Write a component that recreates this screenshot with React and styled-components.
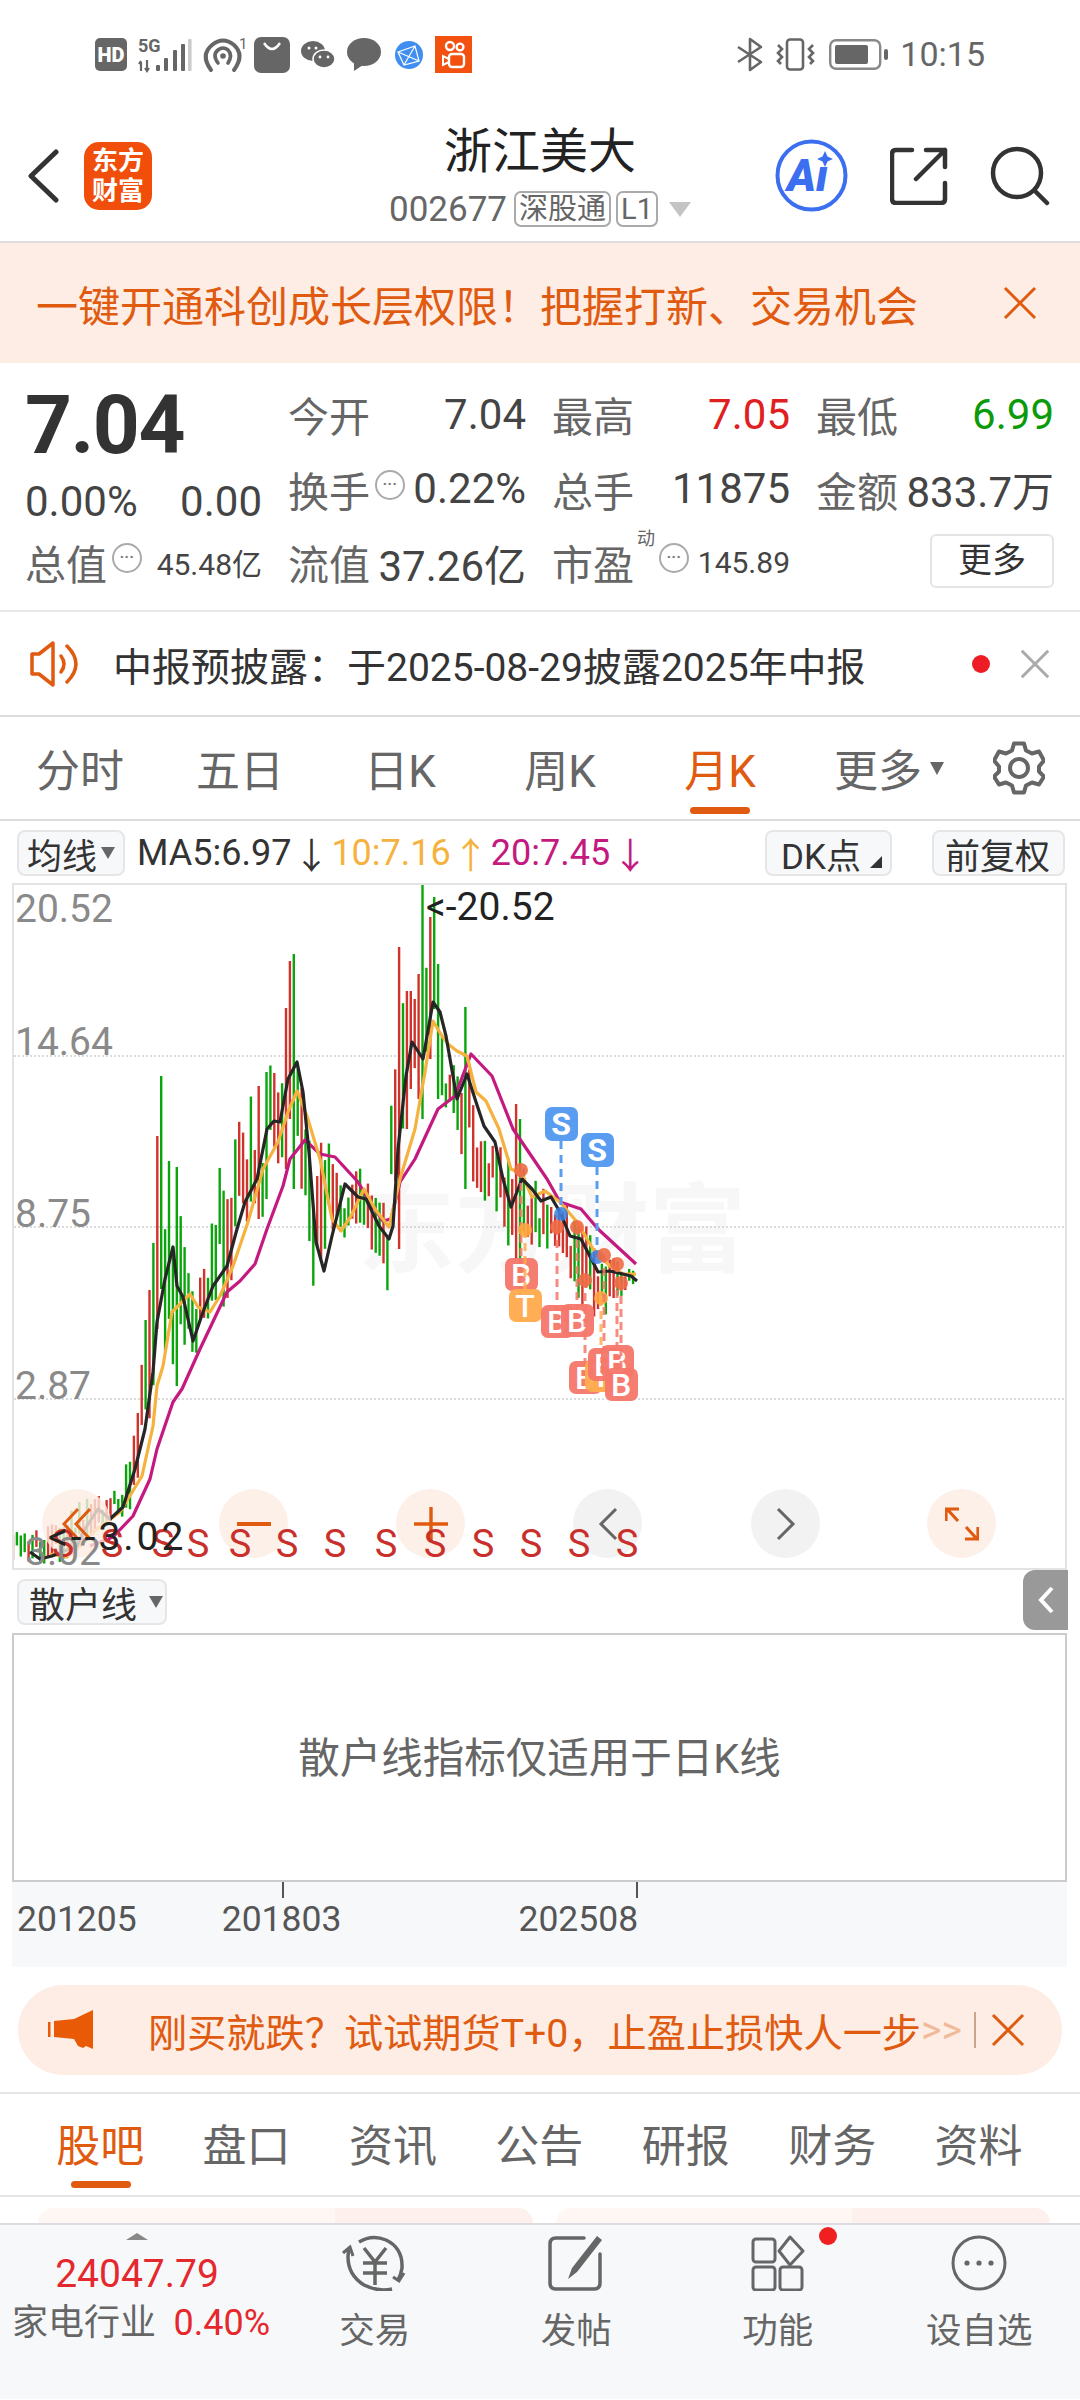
import React from 'react';
import styled, { createGlobalStyle } from 'styled-components';

const ORANGE = '#e05a10';
const RED = '#d0332b';
const GREEN = '#0aa50a';

const GlobalStyle = createGlobalStyle`
  html, body {
    margin: 0;
    padding: 0;
    background: #fff;
  }
  body {
    font-family: Roboto, "Noto Sans CJK SC", sans-serif;
    color: #444;
  }
  * {
    box-sizing: border-box;
  }
`;

// chart data, in page pixels
const MA5 = [[30,1553],[40,1560],[52,1557],[77,1547],[83,1533],[98,1510],[110,1520],[123,1508],[135,1470],[145,1430],[153,1373],[157,1323],[165,1280],[173,1248],[177,1287],[183,1298],[193,1342],[203,1313],[213,1287],[227,1267],[237,1230],[245,1203],[257,1180],[267,1130],[274,1122],[280,1123],[288,1080],[297,1063],[303,1093],[309,1153],[316,1243],[324,1272],[332,1237],[345,1185],[358,1198],[366,1200],[379,1227],[389,1240],[393,1227],[398,1150],[406,1077],[412,1043],[423,1060],[433,1003],[440,1013],[446,1037],[457,1100],[467,1075],[476,1103],[484,1127],[495,1143],[503,1180],[511,1208],[522,1180],[532,1190],[541,1202],[551,1198],[560,1213],[570,1237],[581,1240],[598,1273],[610,1272],[631,1277],[637,1282]];
const MA10 = [[50,1555],[67,1558],[80,1547],[97,1530],[120,1513],[142,1477],[153,1427],[157,1387],[163,1367],[172,1313],[190,1295],[198,1308],[210,1313],[220,1297],[233,1267],[248,1223],[263,1170],[278,1143],[288,1113],[297,1092],[307,1117],[320,1160],[332,1220],[341,1232],[351,1217],[364,1190],[375,1210],[389,1228],[400,1180],[415,1130],[425,1073],[433,1022],[442,1037],[448,1045],[457,1052],[467,1057],[476,1093],[486,1102],[499,1130],[511,1170],[522,1175],[532,1198],[545,1192],[560,1203],[577,1223],[593,1250],[610,1267],[623,1275],[636,1275]];
const MA20 = [[90,1547],[113,1538],[133,1517],[150,1480],[157,1450],[173,1403],[182,1390],[200,1350],[227,1293],[240,1282],[255,1265],[267,1230],[283,1187],[290,1160],[305,1141],[320,1155],[335,1158],[358,1183],[370,1203],[383,1222],[391,1220],[400,1183],[415,1160],[438,1110],[455,1097],[471,1055],[492,1077],[513,1130],[547,1180],[560,1203],[581,1210],[598,1230],[636,1265]];

const TOP_EDGE = [[13,1530],[60,1520],[90,1490],[120,1490],[130,1440],[137,1377],[148,1277],[157,1200],[177,1190],[190,1260],[209,1230],[229,1110],[245,1100],[260,1090],[285,1030],[300,1040],[310,1120],[332,1135],[345,1190],[360,1160],[372,1170],[385,1200],[398,1000],[410,992],[421,950],[437,965],[446,1060],[465,1040],[480,1120],[500,1130],[518,1140],[525,1160],[540,1180],[560,1195],[580,1210],[600,1240],[625,1265],[637,1272]];
const BOTTOM_EDGE = [[13,1565],[60,1565],[100,1540],[135,1510],[148,1440],[165,1405],[177,1387],[190,1370],[210,1330],[235,1290],[260,1230],[290,1170],[305,1240],[315,1320],[330,1290],[345,1240],[365,1240],[380,1270],[390,1300],[398,1220],[410,1100],[430,1100],[450,1130],[475,1190],[490,1210],[510,1260],[530,1250],[560,1250],[580,1320],[600,1330],[620,1300],[637,1285]];
const SPIKES = [[157,1137,1330,RED],[161,1077,1290,GREEN],[168,1162,1320,GREEN],[177,1168,1387,GREEN],[265,1073,1200,GREEN],[260,1087,1220,RED],[285,1009,1170,RED],[289,962,1120,RED],[292,955,1190,GREEN],[398,948,1250,RED],[401,927,1180,GREEN],[406,992,1130,RED],[410,992,1090,RED],[417,975,1100,RED],[421,885,1120,GREEN],[429,918,1060,RED],[433,898,1010,GREEN],[437,965,1100,GREEN],[465,1008,1190,GREEN],[518,1105,1260,RED],[521,1120,1300,GREEN]];

const rnd = n => {
  const s = Math.sin(n * 12.9898) * 43758.5453;
  return s - Math.floor(s);
};

const lerp = (pts, x) => {
  for (let i = 1; i < pts.length; i++) {
    if (x <= pts[i][0]) {
      const [x0, y0] = pts[i - 1];
      const [x1, y1] = pts[i];
      return y0 + ((y1 - y0) * (x - x0)) / (x1 - x0);
    }
  }
  return pts[pts.length - 1][1];
};

const candles = [];
for (let i = 0; i < 160; i++) {
  const x = 13 + 3.9 * i;
  const spike = SPIKES.find(s => Math.abs(s[0] - x) < 1.96);
  if (spike) {
    candles.push({ x, top: spike[1], bottom: spike[2], color: spike[3] });
    continue;
  }
  const hi = lerp(TOP_EDGE, x);
  const lo = lerp(BOTTOM_EDGE, x);
  const range = lo - hi;
  const len = range * (0.35 + 0.4 * rnd(i + 1));
  const top = hi + (range - len) * rnd(i + 200);
  candles.push({
    x,
    top,
    bottom: top + len,
    color: rnd(i + 400) > 0.55 ? GREEN : RED,
  });
}

const toPoints = pts => pts.map(p => p.join(',')).join(' ');

const FLAGS = [
  { x: 521, y: 1275, dot: 1171, label: 'B', color: '#f5786b' },
  { x: 525, y: 1306, dot: 1231, label: 'T', color: '#ffab4f' },
  { x: 557, y: 1322, dot: 1228, label: 'B', color: '#f5786b' },
  { x: 577, y: 1321, dot: 1228, label: 'B', color: '#f5786b' },
  { x: 585, y: 1378, dot: 1281, label: 'B', color: '#f5786b' },
  { x: 601, y: 1376, dot: 1299, label: 'T', color: '#ffab4f' },
  { x: 604, y: 1365, dot: 1256, label: 'B', color: '#f5786b' },
  { x: 617, y: 1362, dot: 1265, label: 'B', color: '#f5786b' },
  { x: 621, y: 1385, dot: 1284, label: 'B', color: '#f5786b' },
];
const SELLS = [
  { x: 561, y: 1108, dot: 1215 },
  { x: 597, y: 1134, dot: 1258 },
];
const S_MARKS = [63, 112, 163, 198, 240, 287, 335, 386, 435, 483, 531, 579, 627];

// page

const Page = styled.div`
  width: 1080px;
  height: 2400px;
  overflow: hidden;
  background: #fff;
`;

const StatusBar = styled.div`
  height: 110px;
  padding: 36px 95px 0;
  display: flex;
  align-items: flex-start;
  justify-content: space-between;
`;

const StatusGroup = styled.div`
  display: flex;
  align-items: center;
  height: 37px;
`;

const StatusIcon = styled.svg`
  display: block;
  flex: none;
  overflow: visible;
  margin-left: ${({ $gap }) => $gap || 0}px;
`;

const Clock = styled.span`
  font-size: 34px;
  color: #666;
  margin-left: 12px;
  line-height: 37px;
`;

const Header = styled.div`
  height: 133px;
  display: grid;
  grid-template-columns: 1fr auto 1fr;
  border-bottom: 2px solid #ddd;
`;

const HeaderLeft = styled.div`
  display: flex;
  align-items: center;
  padding-left: 27px;
  gap: 25px;
  height: 131px;
`;

const Logo = styled.div`
  width: 68px;
  height: 68px;
  border-radius: 15px;
  background: #f04e0a;
  color: #fff;
  font-size: 26px;
  font-weight: 700;
  line-height: 30px;
  text-align: center;
  display: flex;
  flex-direction: column;
  justify-content: center;
`;

const HeaderCenter = styled.div`
  display: flex;
  flex-direction: column;
  align-items: center;
  padding-top: 14px;
`;

const Title = styled.div`
  font-size: 48px;
  line-height: 56px;
  color: #222;
`;

const CodeRow = styled.div`
  display: flex;
  align-items: center;
  margin-top: 11px;
  height: 36px;
`;

const Code = styled.span`
  font-size: 35px;
  color: #666;
  margin-right: 7px;
`;

const CodeTag = styled.span`
  height: 36px;
  padding: 0 3px;
  border: 2px solid #aaa;
  border-radius: 7px;
  font-size: 29px;
  line-height: 32px;
  color: #666;
  margin-right: 5px;
`;

const DownTriangle = styled.span`
  width: 0;
  height: 0;
  border-left: ${({ $w }) => $w}px solid transparent;
  border-right: ${({ $w }) => $w}px solid transparent;
  border-top: ${({ $h }) => $h}px solid ${({ $color }) => $color};
  margin-left: ${({ $ml }) => $ml || 0}px;
  flex: none;
`;

const HeaderRight = styled.div`
  display: flex;
  justify-content: flex-end;
  align-items: center;
  gap: 42px;
  padding-right: 30px;
  height: 131px;
`;

const PromoBar = styled.div`
  height: 120px;
  background: #fdede4;
  padding: 0 43px 0 36px;
  display: flex;
  align-items: center;
  justify-content: space-between;
  color: ${ORANGE};
  font-size: 42px;
`;

const QuoteGrid = styled.div`
  padding: 14px 24px 0 25px;
  height: 249px;
  display: grid;
  grid-template-columns: 237px repeat(3, 238px);
  grid-template-rows: 74px 75px 72px;
  column-gap: 26px;
  border-bottom: 2px solid #e8e8e8;
`;

const PriceBlock = styled.div`
  grid-row: 1 / 3;
  display: flex;
  flex-direction: column;
`;

const BigPrice = styled.div`
  font-size: 82px;
  font-weight: 700;
  line-height: 96px;
  color: #333;
  letter-spacing: -1.5px;
  height: 96px;
`;

const ChangeRow = styled.div`
  display: flex;
  justify-content: space-between;
  font-size: 42px;
  line-height: 58px;
  color: #444;
`;

const Cell = styled.div`
  display: flex;
  align-items: center;
  justify-content: space-between;
  font-size: 42px;
  white-space: nowrap;
`;

const LabelGroup = styled.span`
  position: relative;
  display: flex;
  align-items: center;
`;

const Label = styled.span`
  font-size: 41px;
  color: #666;
`;

const Value = styled.span`
  color: ${({ $color }) => $color || '#444'};
  font-size: ${({ $small }) => ($small ? 30 : 42)}px;
`;

const InfoIcon = styled.span`
  width: 30px;
  height: 30px;
  border-radius: 50%;
  border: 2px solid #aaa;
  margin-left: ${({ $ml }) => $ml || 5}px;
  margin-top: -8px;
  color: #777;
  font-size: 15px;
  font-weight: 700;
  line-height: 16px;
  letter-spacing: 0.5px;
  text-align: center;
  flex: none;
`;

const Superscript = styled.span`
  position: absolute;
  left: 85px;
  top: -8px;
  font-size: 18px;
  color: #666;
`;

const MoreButton = styled.div`
  width: 124px;
  height: 54px;
  margin-left: auto;
  margin-top: -2px;
  background: #fff;
  border: 2px solid #e4e4e4;
  border-radius: 6px;
  font-size: 34px;
  line-height: 48px;
  color: #333;
  text-align: center;
`;

const NoticeBar = styled.div`
  height: 105px;
  padding: 0 30px;
  display: flex;
  align-items: center;
  border-bottom: 2px solid #ddd;
  font-size: 39px;
  color: #333;
`;

const NoticeText = styled.span`
  margin-left: 33px;
  flex: 1;
`;

const RedDot = styled.span`
  width: 18px;
  height: 18px;
  border-radius: 50%;
  background: #ee1c25;
  margin-right: 30px;
`;

const PeriodTabs = styled.div`
  height: 104px;
  display: grid;
  grid-template-columns: repeat(6, 160px) 1fr;
  align-items: center;
  border-bottom: 2px solid #ddd;
`;

const PeriodTab = styled.div`
  position: relative;
  display: flex;
  align-items: center;
  justify-content: center;
  height: 100%;
  padding-left: ${({ $shift }) => $shift || 0}px;
  font-size: 44px;
  color: ${({ $active }) => ($active ? ORANGE : '#666')};

  &::after {
    content: '';
    display: ${({ $active }) => ($active ? 'block' : 'none')};
    position: absolute;
    left: 50px;
    bottom: 5px;
    width: 60px;
    height: 7px;
    border-radius: 4px;
    background: ${ORANGE};
  }
`;

const GearSlot = styled.div`
  padding-left: 33px;
  display: flex;
  align-items: center;
`;

const MaRow = styled.div`
  height: 62px;
  padding: 2px 15px 0 17px;
  display: flex;
  align-items: center;
  font-size: 36px;
`;

const PlainButton = styled.div`
  position: relative;
  height: 46px;
  padding: 0 ${({ $pad }) => $pad || 9}px;
  display: flex;
  align-items: center;
  background: #f7f8fa;
  border: 2px solid #e6e6e6;
  border-radius: 8px;
  font-size: ${({ $size }) => $size || 35}px;
  color: #333;
  white-space: nowrap;
  margin-left: ${({ $auto, $ml }) => ($auto ? 'auto' : `${$ml || 0}px`)};
  width: ${({ $w }) => ($w ? `${$w}px` : 'auto')};
  flex: none;
`;

const MaValue = styled.span`
  color: ${({ $color }) => $color};
  font-size: 36px;
  margin-left: ${({ $ml }) => $ml || 0}px;
`;

const CornerMark = styled.span`
  position: absolute;
  right: 8px;
  bottom: 6px;
  width: 0;
  height: 0;
  border-left: 12px solid transparent;
  border-bottom: 12px solid #333;
`;

const ChartBox = styled.div`
  position: relative;
  margin: 0 13px 0 12px;
  height: 687px;
  border: 2px solid #e3e3e3;
  overflow: hidden;
`;

const ChartCanvas = styled.svg`
  display: block;
  width: 100%;
  height: 100%;
`;

const AxisLabel = styled.span`
  position: absolute;
  left: ${({ $x }) => $x - 14}px;
  top: ${({ $y }) => $y - 886 - 22}px;
  font-size: 39px;
  line-height: 44px;
  color: ${({ $dark }) => ($dark ? '#222' : '#8a8a8a')};
  letter-spacing: ${({ $spread }) => $spread || 0}px;
  white-space: nowrap;
`;

const ChartRound = styled.div`
  position: absolute;
  left: ${({ $x }) => $x - 14 - 34}px;
  top: ${1524 - 886 - 34}px;
  width: 69px;
  height: 69px;
  border-radius: 50%;
  background: ${({ $gray }) => ($gray ? 'rgba(240,240,240,0.85)' : 'rgba(253,236,226,0.8)')};
  display: flex;
  align-items: center;
  justify-content: center;
`;

const SellMark = styled.span`
  position: absolute;
  left: ${({ $x }) => $x - 14 - 12}px;
  top: ${1545 - 886 - 22}px;
  font-size: 38px;
  line-height: 44px;
  width: 24px;
  text-align: center;
  color: #c9302c;
`;

const SubBar = styled.div`
  position: relative;
  height: 63px;
  padding: 9px 0 0 17px;
`;

const CollapseHandle = styled.div`
  position: absolute;
  right: 12px;
  top: 0;
  width: 45px;
  height: 60px;
  background: #999;
  border-radius: 12px 0 0 12px;
  display: flex;
  align-items: center;
  justify-content: center;
`;

const SubChart = styled.div`
  margin: 0 13px 0 12px;
  height: 249px;
  border: 2px solid #ccc;
  padding-bottom: 5px;
  display: flex;
  align-items: center;
  justify-content: center;
  font-size: 41.5px;
  color: #666;
`;

const DateAxis = styled.div`
  margin: 0 13px 0 12px;
  height: 85px;
  background: #f7f8fa;
  display: flex;
  padding: 16px 0 0 5px;
`;

const DateLabel = styled.span`
  position: relative;
  font-size: 35.5px;
  line-height: 42px;
  height: 42px;
  color: #555;
  margin-left: ${({ $ml }) => $ml || 0}px;

  &::before {
    content: '';
    display: ${({ $tick }) => ($tick ? 'block' : 'none')};
    position: absolute;
    top: -16px;
    width: 2px;
    height: 16px;
    background: #555;
    ${({ $tick }) => ($tick === 'center' ? 'left: 50%;' : 'right: 0;')}
  }
`;

const AdBar = styled.div`
  margin: 18px 18px 0;
  height: 90px;
  border-radius: 45px;
  background: #fdede4;
  display: flex;
  align-items: center;
  padding-left: 30px;
  color: ${ORANGE};
  font-size: 39.2px;
  white-space: nowrap;
`;

const AdText = styled.span`
  margin-left: 54px;
  width: 773px;
`;

const AdArrows = styled.span`
  width: 53px;
  opacity: 0.35;
`;

const AdDivider = styled.span`
  width: 2px;
  height: 36px;
  background: #c9a58e;
  margin-right: 15px;
`;

const ContentTabs = styled.div`
  margin-top: 17px;
  height: 105px;
  padding-left: 27px;
  display: grid;
  grid-template-columns: repeat(7, 146.4px);
  border-top: 2px solid #e5e5e5;
  border-bottom: 2px solid #e5e5e5;
`;

const ContentTab = styled.div`
  position: relative;
  display: flex;
  align-items: center;
  justify-content: center;
  font-size: 44px;
  padding-bottom: 4px;
  color: ${({ $active }) => ($active ? ORANGE : '#666')};

  &::after {
    content: '';
    display: ${({ $active }) => ($active ? 'block' : 'none')};
    position: absolute;
    left: 44px;
    bottom: 7px;
    width: 60px;
    height: 7px;
    border-radius: 4px;
    background: ${ORANGE};
  }
`;

const CardPeek = styled.div`
  height: 26px;
  padding: 11px 30px 0 38px;
  display: flex;
  gap: 23px;
`;

const PeekCard = styled.div`
  flex: 1;
  border-radius: 26px 26px 0 0;
  background: linear-gradient(90deg, #fff7f4 60%, #fef0ec 60%);
`;

const BottomNav = styled.div`
  height: 176px;
  background: #f7f8fa;
  border-top: 2px solid #dcdce0;
  display: grid;
  grid-template-columns: 274px repeat(4, 201.5px);
`;

const IndustryCell = styled.div`
  display: flex;
  flex-direction: column;
  align-items: center;
  padding-top: 8px;
`;

const UpTriangle = styled.span`
  width: 0;
  height: 0;
  border-left: 11px solid transparent;
  border-right: 11px solid transparent;
  border-bottom: 7px solid #888;
`;

const IndexValue = styled.div`
  margin-top: 10px;
  font-size: 39px;
  line-height: 48px;
  color: #e5282d;
`;

const IndustryRow = styled.div`
  margin-top: 3px;
  width: 274px;
  padding-left: 12px;
  display: flex;
  justify-content: space-between;
  font-size: 36px;
  line-height: 44px;
  color: #666;
  white-space: nowrap;
`;

const IndustryPct = styled.span`
  color: #e5282d;
  margin-right: 4px;
`;

const NavItem = styled.div`
  position: relative;
  display: flex;
  flex-direction: column;
  align-items: center;
  padding-top: 10px;
  font-size: 35.5px;
  line-height: 44px;
  color: #666;
`;

const NavLabel = styled.span`
  margin-top: 18px;
`;

const NavBadge = styled.span`
  position: absolute;
  left: 142px;
  top: 2px;
  width: 18px;
  height: 18px;
  border-radius: 50%;
  background: #f02020;
`;

const BackIcon = () => (
  <svg width="32" height="54" viewBox="0 0 32 54" fill="none">
    <path d="M29 3 L4 27 L29 51" stroke="#333" strokeWidth="5" strokeLinecap="round" strokeLinejoin="round" />
  </svg>
);

const AiIcon = () => (
  <svg width="73" height="73" viewBox="0 0 73 73" fill="none">
    <circle cx="36.5" cy="36.5" r="34" stroke="#3b6ff0" strokeWidth="4" />
    <text x="12" y="52" fontFamily="Roboto, sans-serif" fontSize="44" fontWeight="900" fontStyle="italic" fill="#3b6ff0">Ai</text>
    <rect x="39" y="20" width="18" height="7" fill="#fff" />
    <path d="M50 12 L52.5 17.5 L58 20 L52.5 22.5 L50 28 L47.5 22.5 L42 20 L47.5 17.5 Z" fill="#3b6ff0" />
  </svg>
);

const ShareIcon = () => (
  <svg width="58" height="58" viewBox="0 0 58 58" fill="none" stroke="#333" strokeWidth="4.5" strokeLinecap="round" strokeLinejoin="round">
    <path d="M22 3 H6 Q2 3 2 7 V52 Q2 56 6 56 H51 Q55 56 55 52 V36" />
    <path d="M26 32 L55 3 M36 3 H55 V20" />
  </svg>
);

const SearchIcon = () => (
  <svg width="60" height="60" viewBox="0 0 60 60" fill="none" stroke="#333" strokeWidth="4.5" strokeLinecap="round">
    <circle cx="27" cy="27" r="24" />
    <path d="M45 45 L57 57" />
  </svg>
);

const CloseIcon = ({ size = 34, color = ORANGE, width = 3 }) => (
  <svg width={size} height={size} viewBox="0 0 34 34" fill="none" stroke={color} strokeWidth={width}>
    <path d="M2 2 L32 32 M32 2 L2 32" />
  </svg>
);

const SpeakerIcon = () => (
  <svg width="50" height="46" viewBox="0 0 50 46" fill="none" stroke={ORANGE} strokeWidth="3.5" strokeLinejoin="round" strokeLinecap="round">
    <path d="M2 13 H9 L23 2 V44 L9 33 H2 Z" />
    <path d="M31 15 Q37 23 31 31" />
    <path d="M37 5 Q55 23 37 41" />
  </svg>
);

const GearIcon = () => (
  <svg width="52" height="54" viewBox="0 0 52 54" fill="none" stroke="#666" strokeWidth="4" strokeLinejoin="round">
    <path d="M21 3 H31 L33 10 L39 13 L46 11 L51 20 L46 26 V31 L51 36 L46 44 L39 42 L33 45 L31 52 H21 L19 45 L13 42 L6 44 L1 36 L6 31 V26 L1 20 L6 11 L13 13 L19 10 Z" transform="translate(0 -0.5)" />
    <circle cx="26" cy="27" r="9" />
  </svg>
);

const HornIcon = () => (
  <svg width="46" height="40" viewBox="0 0 46 40" fill={'#e85a05'}>
    <rect x="0" y="12" width="2.5" height="15" />
    <path d="M6 11 L26 9 L45 0 V39 L38 36 L35 38 L30 36 L26 29 L6 27 Z" />
  </svg>
);

const TradeIcon = () => (
  <svg width="66" height="56" viewBox="0 0 66 56" fill="none" stroke="#666" strokeWidth="3.5">
    <path d="M17 7 Q30 -1 44 5 Q61 13 60 33 Q59 40 56 45" />
    <path d="M50 54 Q36 57 22 50 Q6 40 6 22 Q6 18 7 15" />
    <path d="M1 18 L8 12 L11 21" strokeWidth="3" />
    <path d="M62 38 L57 46 L51 42" strokeWidth="3" />
    <path d="M22 13 L33 27 L44 13 M21 28 H45 M21 38 H45 M33 27 V50" />
  </svg>
);

const PostIcon = () => (
  <svg width="56" height="56" viewBox="0 0 56 56" fill="none" stroke="#666" strokeWidth="3.5" strokeLinecap="round">
    <path d="M36 3 H8 Q2 3 2 9 V48 Q2 54 8 54 H46 Q52 54 52 48 V19" />
    <path d="M49 1 L54 5 L29 37 L20 44 L24 33 Z" fill="#666" stroke="none" />
  </svg>
);

const FuncIcon = () => (
  <svg width="54" height="56" viewBox="0 0 54 56" fill="none" stroke="#666" strokeWidth="3">
    <rect x="2" y="4" width="22" height="23" rx="3" />
    <path d="M39 2 L52 16 L39 30 L28 16 Z" strokeLinejoin="round" />
    <rect x="2" y="32" width="22" height="23" rx="3" />
    <rect x="29" y="32" width="22" height="23" rx="3" />
  </svg>
);

const MoreIcon = () => (
  <svg width="56" height="56" viewBox="0 0 56 56" fill="none" stroke="#666" strokeWidth="3">
    <circle cx="28" cy="28" r="26" />
    <circle cx="16" cy="28" r="2.6" fill="#666" stroke="none" />
    <circle cx="28" cy="28" r="2.6" fill="#666" stroke="none" />
    <circle cx="40" cy="28" r="2.6" fill="#666" stroke="none" />
  </svg>
);

const KlineChart = () => (
  <ChartCanvas viewBox="14 886 1051 683">
    <text x="358" y="1265" fontSize="97" fontWeight="700" fill="#f7f7f7" fontFamily={'"Noto Sans CJK SC", sans-serif'}>东方财富</text>
    {[1057, 1228, 1400].map(y => (
      <line key={y} x1="14" x2="1065" y1={y} y2={y} stroke="#cfcfcf" strokeWidth="1.5" strokeDasharray="2 2" />
    ))}
    {candles.map((c, i) => (
      <line key={i} x1={c.x} x2={c.x} y1={c.top} y2={c.bottom} stroke={c.color} strokeWidth="2.4" />
    ))}
    <polyline points={toPoints(MA20)} fill="none" stroke="#c4197f" strokeWidth="3.2" strokeLinejoin="round" />
    <polyline points={toPoints(MA10)} fill="none" stroke="#f5b23e" strokeWidth="3.2" strokeLinejoin="round" />
    <polyline points={toPoints(MA5)} fill="none" stroke="#262626" strokeWidth="3.2" strokeLinejoin="round" />
    {SELLS.map(s => (
      <g key={s.x}>
        <line x1={s.x} x2={s.x} y1={s.y + 34} y2={s.dot} stroke="#5a9df0" strokeWidth="3" strokeDasharray="8 6" />
        <circle cx={s.x} cy={s.dot} r="7" fill="#3b82e0" fillOpacity="0.85" />
        <rect x={s.x - 16} y={s.y} width="33" height="34" rx="7" fill="#5a9df0" />
        <text x={s.x} y={s.y + 28} textAnchor="middle" fontSize="32" fontWeight="700" fill="#fff" fontFamily="Roboto, sans-serif">S</text>
      </g>
    ))}
    {FLAGS.map(f => (
      <g key={`${f.x}-${f.y}`}>
        <line x1={f.x} x2={f.x} y1={f.dot} y2={f.y} stroke={f.color} strokeWidth="3" strokeDasharray="8 5" opacity="0.85" />
        <circle cx={f.x} cy={f.dot} r="7" fill={f.color === '#ffab4f' ? '#ffa640' : '#ee6a45'} fillOpacity="0.9" />
        <rect x={f.x - 16} y={f.y - 16} width="33" height="33" rx="7" fill={f.color} fillOpacity="0.96" />
        <text x={f.x} y={f.y + 12} textAnchor="middle" fontSize="32" fontWeight="500" fill="#fff" fontFamily="Roboto, sans-serif">{f.label}</text>
      </g>
    ))}
  </ChartCanvas>
);

const App = () => {
  return (
    <Page>
      <GlobalStyle />
      <StatusBar>
        <StatusGroup>
          <StatusIcon width="32" height="33" viewBox="0 0 32 33">
            <rect width="32" height="33" rx="5" fill="#666" />
            <text x="16" y="24" textAnchor="middle" fontSize="20" fontWeight="900" fill="#fff" fontFamily="Roboto, sans-serif">HD</text>
          </StatusIcon>
          <StatusIcon $gap={11} width="54" height="34" viewBox="0 0 54 34">
            <text x="0" y="14" fontSize="18" fontWeight="700" fill="#666" fontFamily="Roboto, sans-serif">5G</text>
            <path d="M3 24 V33 M1 26 L3 23 M9 22 V33 M7 30 L9 33 L11 30" stroke="#666" strokeWidth="2.2" fill="none" />
            <rect x="18" y="27" width="4" height="6" rx="1" fill="#666" />
            <rect x="26" y="20" width="4" height="13" rx="1" fill="#666" />
            <rect x="35" y="12" width="4" height="21" rx="1" fill="#666" />
            <rect x="43" y="6" width="4" height="27" rx="1" fill="#666" />
            <rect x="50" y="1" width="3.6" height="32" rx="1" fill="#ccc" />
          </StatusIcon>
          <StatusIcon $gap={11} width="44" height="35" viewBox="0 0 44 35" fill="none" stroke="#666">
            <path d="M8 33 Q-3 18 9 8 Q20 -1 31 8 Q42 18 31 33" strokeWidth="4" strokeLinecap="round" />
            <path d="M15 26 Q9 18 15 13 Q20 9 25 13 Q30 18 25 26" strokeWidth="3.6" strokeLinecap="round" />
            <circle cx="20" cy="19" r="2.8" fill="#666" stroke="none" />
            <text x="36" y="12" fontSize="15" fill="#666" stroke="none" fontFamily="Roboto, sans-serif">1</text>
          </StatusIcon>
          <StatusIcon $gap={7} width="36" height="36" viewBox="0 0 36 36">
            <rect width="36" height="36" rx="7" fill="#666" />
            <path d="M10 6 Q18 18 26 6" fill="none" stroke="#fff" strokeWidth="2.4" />
          </StatusIcon>
          <StatusIcon $gap={11} width="34" height="29" viewBox="0 0 34 29">
            <ellipse cx="12" cy="11" rx="12" ry="10" fill="#666" />
            <ellipse cx="23" cy="19" rx="11" ry="9" fill="#666" stroke="#fff" strokeWidth="1.5" />
            <circle cx="8" cy="8" r="1.5" fill="#fff" />
            <circle cx="15" cy="8" r="1.5" fill="#fff" />
            <circle cx="19" cy="17" r="1.4" fill="#fff" />
            <circle cx="27" cy="17" r="1.4" fill="#fff" />
          </StatusIcon>
          <StatusIcon $gap={12} width="34" height="33" viewBox="0 0 34 33">
            <ellipse cx="17" cy="14" rx="17" ry="14" fill="#666" />
            <path d="M7 24 L7 33 L16 27 Z" fill="#666" />
          </StatusIcon>
          <StatusIcon $gap={14} width="28" height="28" viewBox="0 0 28 28">
            <circle cx="14" cy="14" r="14" fill="#3f8ef0" />
            <path d="M3 11 L20 5 L24 20 L9 24 Z M3 11 L24 20 M20 5 L9 24" fill="none" stroke="#fff" strokeWidth="1.2" />
          </StatusIcon>
          <StatusIcon $gap={12} width="37" height="37" viewBox="0 0 37 37">
            <rect width="37" height="37" fill="#f2510f" />
            <circle cx="15" cy="10" r="4" fill="none" stroke="#fff" strokeWidth="2.4" />
            <circle cx="25" cy="11" r="3.4" fill="none" stroke="#fff" strokeWidth="2.4" />
            <rect x="14" y="18" width="15" height="13" rx="3" fill="none" stroke="#fff" strokeWidth="2.4" />
            <path d="M14 23 L8 20 V29 L14 26" fill="none" stroke="#fff" strokeWidth="2" />
          </StatusIcon>
        </StatusGroup>
        <StatusGroup>
          <StatusIcon width="26" height="33" viewBox="0 0 26 33" fill="none" stroke="#666" strokeWidth="2.6">
            <path d="M1 9 L24 24 L13 32 V1 L24 9 L1 24" strokeLinejoin="round" />
          </StatusIcon>
          <StatusIcon $gap={12} width="41" height="33" viewBox="0 0 41 33" fill="none" stroke="#666" strokeWidth="2.6">
            <rect x="12" y="1.5" width="16" height="30" rx="3" />
            <path d="M3 7 L7 11 L3 15 L7 19 L3 23 L6 26" />
            <path d="M38 7 L34 11 L38 15 L34 19 L38 23 L35 26" />
          </StatusIcon>
          <StatusIcon $gap={13} width="59" height="31" viewBox="0 0 59 31">
            <rect x="1.2" y="1.2" width="50" height="28.6" rx="6" fill="none" stroke="#888" strokeWidth="2.4" />
            <rect x="6" y="6" width="33" height="19" rx="2" fill="#666" />
            <rect x="55" y="10" width="4" height="11" rx="2" fill="#666" />
          </StatusIcon>
          <Clock>10:15</Clock>
        </StatusGroup>
      </StatusBar>

      <Header>
        <HeaderLeft>
          <BackIcon />
          <Logo>
            <span>东方</span>
            <span>财富</span>
          </Logo>
        </HeaderLeft>
        <HeaderCenter>
          <Title>浙江美大</Title>
          <CodeRow>
            <Code>002677</Code>
            <CodeTag>深股通</CodeTag>
            <CodeTag>L1</CodeTag>
            <DownTriangle $w={11} $h={15} $color="#c4c4c4" $ml={6} />
          </CodeRow>
        </HeaderCenter>
        <HeaderRight>
          <AiIcon />
          <ShareIcon />
          <SearchIcon />
        </HeaderRight>
      </Header>

      <PromoBar>
        <span>一键开通科创成长层权限！把握打新、交易机会</span>
        <CloseIcon />
      </PromoBar>

      <QuoteGrid>
        <PriceBlock>
          <BigPrice>7.04</BigPrice>
          <ChangeRow>
            <span>0.00%</span>
            <span>0.00</span>
          </ChangeRow>
        </PriceBlock>
        <Cell>
          <Label>今开</Label>
          <Value>7.04</Value>
        </Cell>
        <Cell>
          <Label>最高</Label>
          <Value $color="#e02020">7.05</Value>
        </Cell>
        <Cell>
          <Label>最低</Label>
          <Value $color="#0a9a0a">6.99</Value>
        </Cell>
        <Cell>
          <LabelGroup>
            <Label>换手</Label>
            <InfoIcon>...</InfoIcon>
          </LabelGroup>
          <Value>0.22%</Value>
        </Cell>
        <Cell>
          <Label>总手</Label>
          <Value>11875</Value>
        </Cell>
        <Cell>
          <Label>金额</Label>
          <Value>833.7万</Value>
        </Cell>
        <Cell>
          <LabelGroup>
            <Label>总值</Label>
            <InfoIcon>...</InfoIcon>
          </LabelGroup>
          <Value $small>45.48亿</Value>
        </Cell>
        <Cell>
          <Label>流值</Label>
          <Value>37.26亿</Value>
        </Cell>
        <Cell>
          <LabelGroup>
            <Label>市盈</Label>
            <Superscript>动</Superscript>
            <InfoIcon $ml={25}>...</InfoIcon>
          </LabelGroup>
          <Value $small>145.89</Value>
        </Cell>
        <Cell>
          <MoreButton>更多</MoreButton>
        </Cell>
      </QuoteGrid>

      <NoticeBar>
        <SpeakerIcon />
        <NoticeText>中报预披露：于2025-08-29披露2025年中报</NoticeText>
        <RedDot />
        <CloseIcon size={30} color="#aaa" width={3.4} />
      </NoticeBar>

      <PeriodTabs>
        <PeriodTab>分时</PeriodTab>
        <PeriodTab>五日</PeriodTab>
        <PeriodTab>日K</PeriodTab>
        <PeriodTab>周K</PeriodTab>
        <PeriodTab $active>月K</PeriodTab>
        <PeriodTab $shift={18}>
          更多
          <DownTriangle $w={7} $h={13} $color="#666" $ml={8} />
        </PeriodTab>
        <GearSlot>
          <GearIcon />
        </GearSlot>
      </PeriodTabs>

      <MaRow>
        <PlainButton $w={108} $pad={8}>
          均线
          <DownTriangle $w={7} $h={12} $color="#666" $ml={4} />
        </PlainButton>
        <MaValue $color="#333" $ml={12}>MA5:6.97</MaValue>
        <MaValue $color="#333" $ml={2}>↓</MaValue>
        <MaValue $color="#f5b23e" $ml={2}>10:7.16</MaValue>
        <MaValue $color="#f5b23e" $ml={2}>↑</MaValue>
        <MaValue $color="#c4197f" $ml={2}>20:7.45</MaValue>
        <MaValue $color="#c4197f" $ml={2}>↓</MaValue>
        <PlainButton $w={127} $pad={14} $auto>
          DK点
          <CornerMark />
        </PlainButton>
        <PlainButton $w={133} $pad={11} $ml={40}>前复权</PlainButton>
      </MaRow>

      <ChartBox>
        <KlineChart />
        <AxisLabel $x={15} $y={910}>20.52</AxisLabel>
        <AxisLabel $x={15} $y={1043}>14.64</AxisLabel>
        <AxisLabel $x={15} $y={1215}>8.75</AxisLabel>
        <AxisLabel $x={15} $y={1387}>2.87</AxisLabel>
        <AxisLabel $x={426} $y={908} $dark>{'<-20.52'}</AxisLabel>
        <ChartRound $x={76}>
          <svg width="30" height="34" viewBox="0 0 30 34" fill="none" stroke={ORANGE} strokeWidth="3">
            <path d="M16 2 L2 17 L16 32 M28 2 L14 17 L28 32" />
          </svg>
        </ChartRound>
        <ChartRound $x={253}>
          <svg width="34" height="4"><rect width="34" height="4" fill={ORANGE} /></svg>
        </ChartRound>
        <ChartRound $x={430}>
          <svg width="34" height="34"><path d="M0 17 H34 M17 0 V34" stroke={ORANGE} strokeWidth="3.4" /></svg>
        </ChartRound>
        <ChartRound $x={607} $gray>
          <svg width="20" height="34" fill="none" stroke="#666" strokeWidth="3"><path d="M18 2 L3 17 L18 32" /></svg>
        </ChartRound>
        <ChartRound $x={785} $gray>
          <svg width="20" height="34" fill="none" stroke="#666" strokeWidth="3"><path d="M2 2 L17 17 L2 32" /></svg>
        </ChartRound>
        <ChartRound $x={961}>
          <svg width="34" height="34" fill="none" stroke={ORANGE} strokeWidth="3.2">
            <path d="M1 14 V2 H14 M2 2 L13 14 M33 20 V32 H20 M32 32 L21 20" />
          </svg>
        </ChartRound>
        {S_MARKS.map(x => (
          <SellMark key={x} $x={x}>S</SellMark>
        ))}
        <AxisLabel $x={25} $y={1553}>3.02</AxisLabel>
        <AxisLabel $x={48} $y={1538} $dark $spread={3}>{'<--3.02'}</AxisLabel>
      </ChartBox>

      <SubBar>
        <PlainButton $w={150} $pad={10} $size={36}>
          散户线
          <DownTriangle $w={7} $h={12} $color="#666" $ml={12} />
        </PlainButton>
        <CollapseHandle>
          <svg width="18" height="30" fill="none" stroke="#fff" strokeWidth="4"><path d="M15 3 L4 15 L15 27" /></svg>
        </CollapseHandle>
      </SubBar>

      <SubChart>散户线指标仅适用于日K线</SubChart>

      <DateAxis>
        <DateLabel>201205</DateLabel>
        <DateLabel $ml={85} $tick="center">201803</DateLabel>
        <DateLabel $ml={177} $tick="right">202508</DateLabel>
      </DateAxis>

      <AdBar>
        <HornIcon />
        <AdText>刚买就跌？试试期货T+0，止盈止损快人一步</AdText>
        <AdArrows>{'>>'}</AdArrows>
        <AdDivider />
        <CloseIcon size={34} />
      </AdBar>

      <ContentTabs>
        <ContentTab $active>股吧</ContentTab>
        <ContentTab>盘口</ContentTab>
        <ContentTab>资讯</ContentTab>
        <ContentTab>公告</ContentTab>
        <ContentTab>研报</ContentTab>
        <ContentTab>财务</ContentTab>
        <ContentTab>资料</ContentTab>
      </ContentTabs>

      <CardPeek>
        <PeekCard />
        <PeekCard />
      </CardPeek>

      <BottomNav>
        <IndustryCell>
          <UpTriangle />
          <IndexValue>24047.79</IndexValue>
          <IndustryRow>
            <span>家电行业</span>
            <IndustryPct>0.40%</IndustryPct>
          </IndustryRow>
        </IndustryCell>
        <NavItem>
          <TradeIcon />
          <NavLabel>交易</NavLabel>
        </NavItem>
        <NavItem>
          <PostIcon />
          <NavLabel>发帖</NavLabel>
        </NavItem>
        <NavItem>
          <FuncIcon />
          <NavBadge />
          <NavLabel>功能</NavLabel>
        </NavItem>
        <NavItem>
          <MoreIcon />
          <NavLabel>设自选</NavLabel>
        </NavItem>
      </BottomNav>
    </Page>
  );
};

export default App;
